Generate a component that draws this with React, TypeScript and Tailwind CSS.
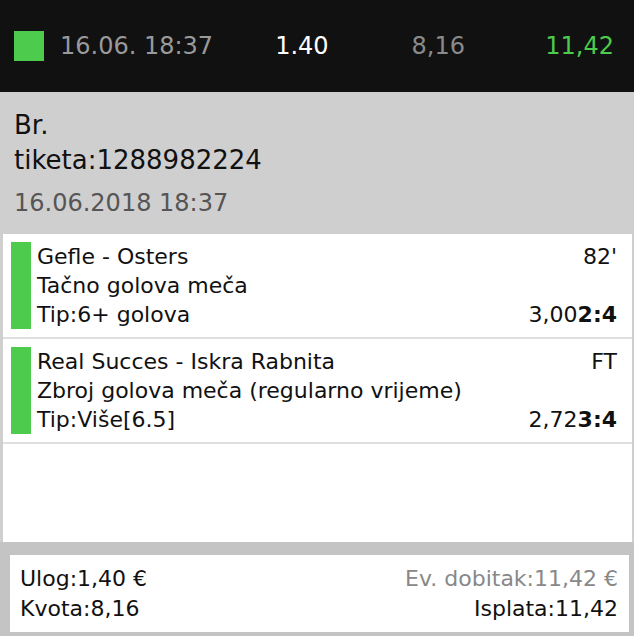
import React from 'react';

type Bet = {
  match: string;
  status: string;
  market: string;
  tip: string;
  odd: string;
  score: string;
};

const bets: Bet[] = [
  { match: 'Gefle - Osters', status: "82'", market: 'Tačno golova meča', tip: 'Tip:6+ golova', odd: '3,00', score: '2:4' },
  {
    match: 'Real Succes - Iskra Rabnita',
    status: 'FT',
    market: 'Zbroj golova meča (regularno vrijeme)',
    tip: 'Tip:Više[6.5]',
    odd: '2,72',
    score: '3:4',
  },
];

const BetRow = ({ bet }: { bet: Bet }) => (
  <div className="flex border-b-2 border-[#dedede] py-2 pl-2 pr-[15px]">
    <div className="w-[20px] shrink-0 bg-[#4ccb4c]" />
    <div className="ml-[6px] flex-1 text-[22px] leading-[29px] text-[#111]">
      <div className="flex justify-between">
        <span>{bet.match}</span>
        <span>{bet.status}</span>
      </div>
      <div>{bet.market}</div>
      <div className="flex justify-between">
        <span>{bet.tip}</span>
        <span>
          {bet.odd}
          <b>{bet.score}</b>
        </span>
      </div>
    </div>
  </div>
);

export default function App() {
  return (
    <div className="flex h-[636px] w-[634px] flex-col overflow-hidden bg-[#cfcfcf] font-['DejaVu_Sans',sans-serif]">
      <div className="flex h-[92px] shrink-0 items-center bg-[#111111] pl-[14px] pr-[20px] text-[24px]">
        <div className="h-[30px] w-[30px] bg-[#4ccb4c]" />
        <span className="ml-[16px] text-[#9a9a9a]">16.06. 18:37</span>
        <span className="ml-[62px] text-white">1.40</span>
        <span className="ml-[83px] text-[#8a8a8a]">8,16</span>
        <span className="ml-auto text-[#4ccb4c]">11,42</span>
      </div>

      <div className="h-[142px] shrink-0 px-[14px] pt-[16px]">
        <div className="text-[26px] leading-[35px] text-[#111]">
          Br.
          <br />
          tiketa:1288982224
        </div>
        <div className="mt-[8px] text-[24px] leading-[35px] text-[#555]">16.06.2018 18:37</div>
      </div>

      <div className="ml-[3px] mr-[2px] h-[308px] shrink-0 bg-white">
        {bets.map((bet) => (
          <BetRow key={bet.match} bet={bet} />
        ))}
      </div>

      <div className="flex-1 bg-[#c4c4c4] pt-[13px] pr-[5px] pb-[4px] pl-[10px]">
        <div className="flex h-full justify-between bg-white pt-[9px] pl-[10px] pr-[11px] text-[22px] leading-[30px] text-[#111]">
          <div>
            <div>Ulog:1,40 €</div>
            <div>Kvota:8,16</div>
          </div>
          <div className="text-right">
            <div className="text-[#888]">Ev. dobitak:11,42 €</div>
            <div>Isplata:11,42</div>
          </div>
        </div>
      </div>
    </div>
  );
}
